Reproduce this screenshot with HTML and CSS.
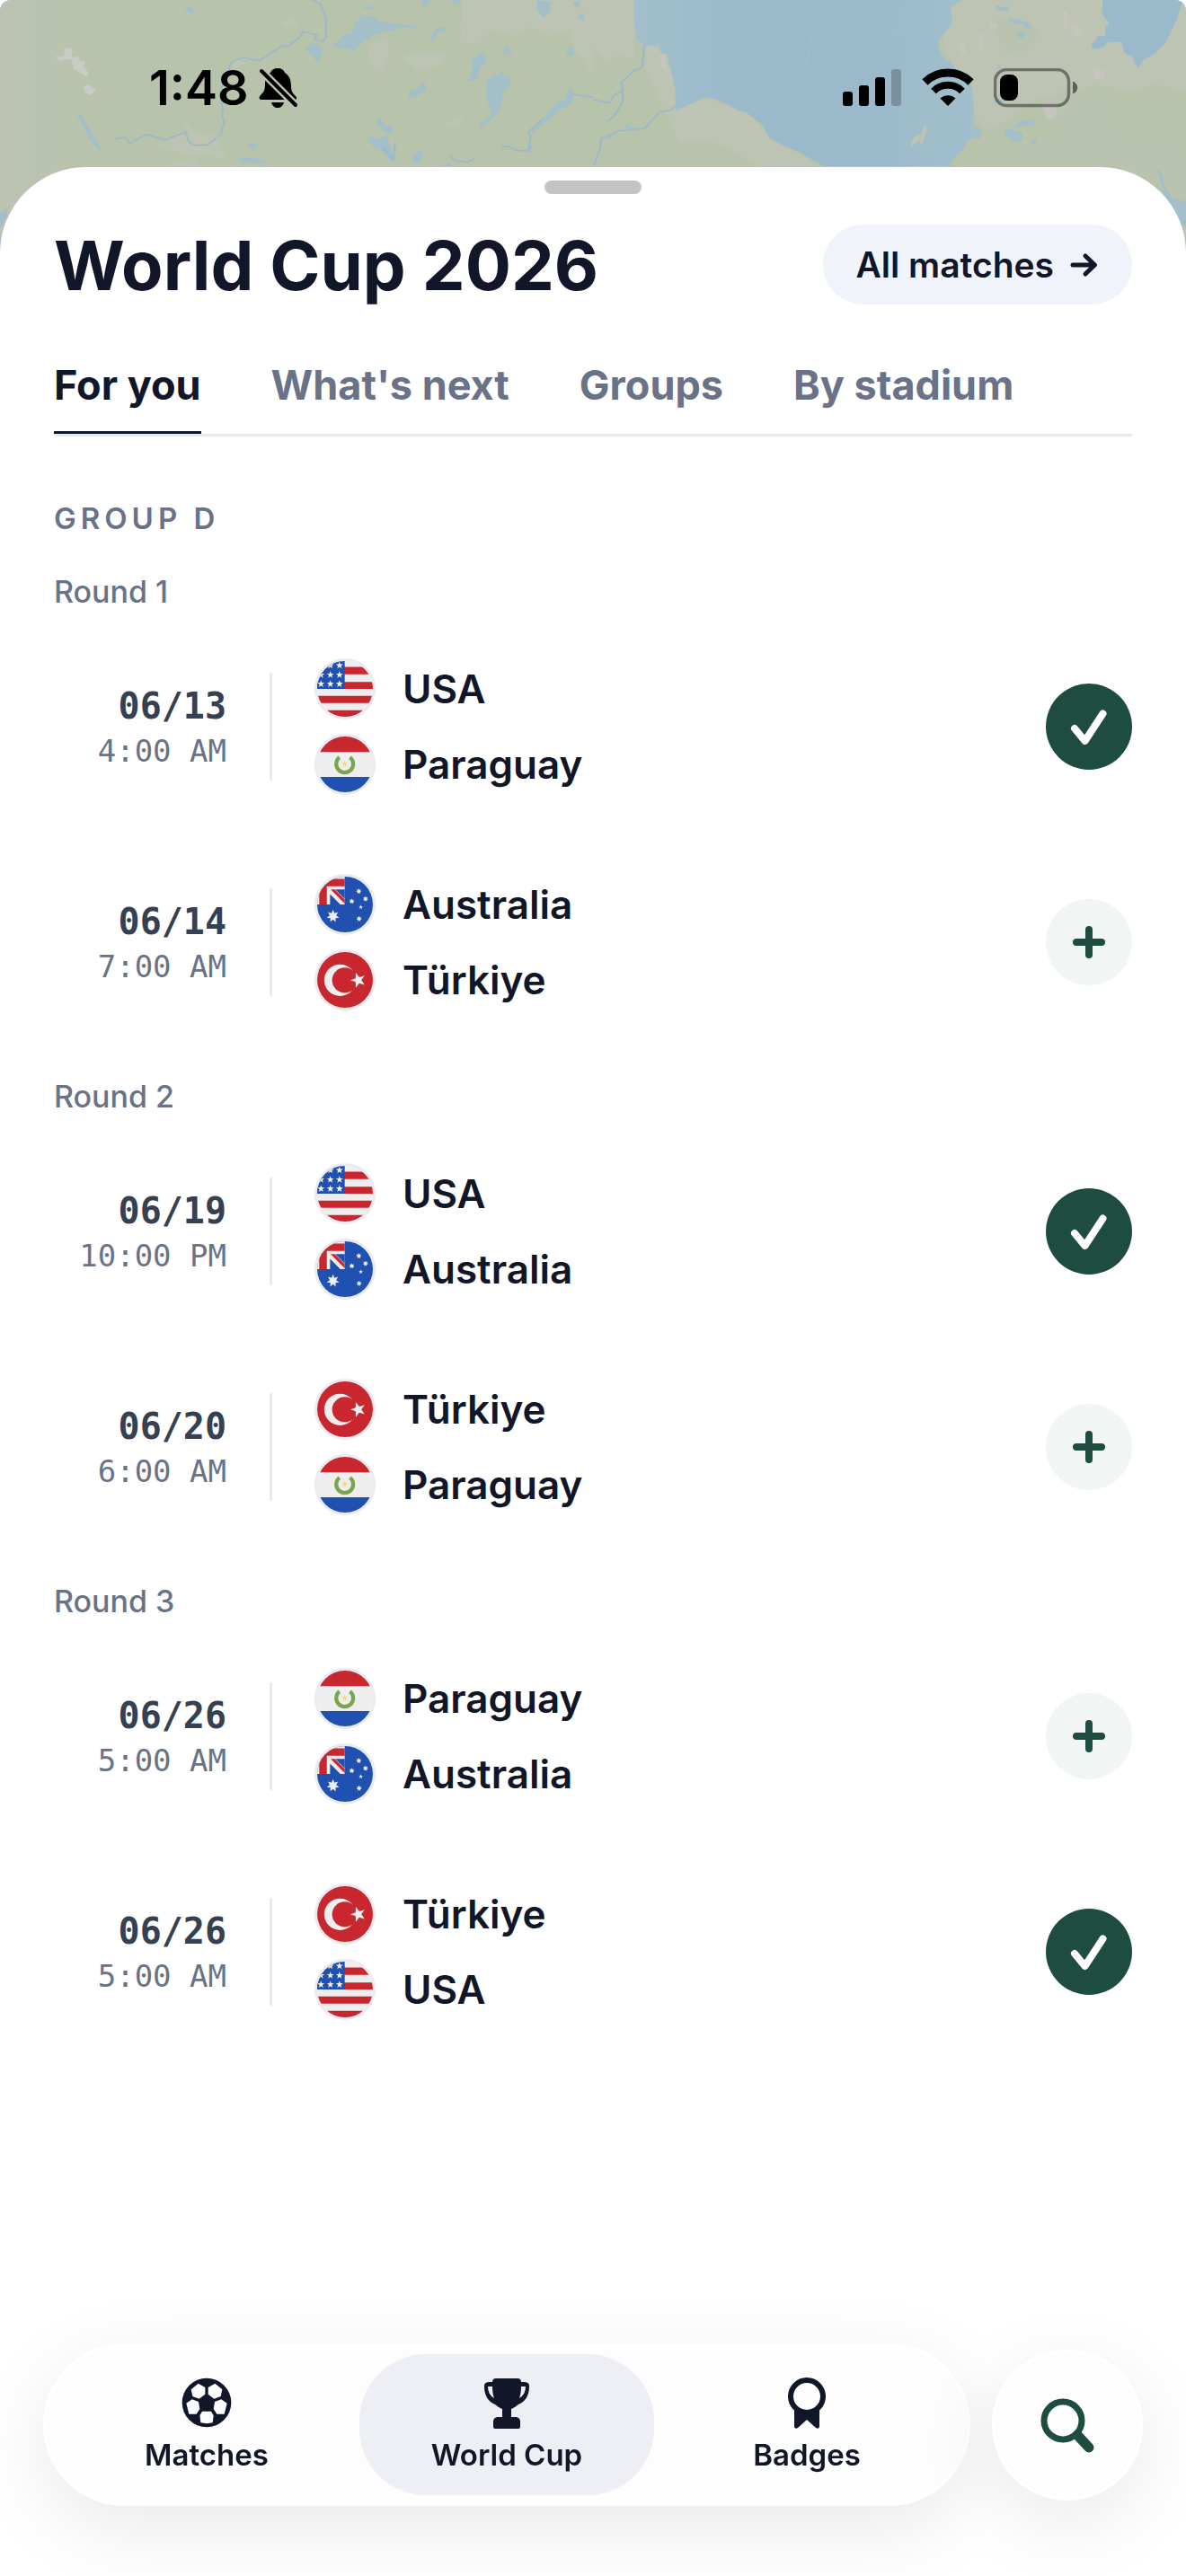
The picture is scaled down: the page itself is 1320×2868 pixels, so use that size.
FILE: index.html
```html
<!DOCTYPE html>
<html lang="en">
<head>
  <meta charset="UTF-8">
  <meta name="viewport" content="width=device-width, initial-scale=1.0">
  <title>World Cup 2026</title>
  <link rel="stylesheet" href="styles.css">
</head>
<body>

  <!-- shared flags -->
  <svg class="sprite" aria-hidden="true">
    <symbol id="star" viewBox="-10 -10 20 20">
      <path d="M0-10 2.4-3.2 9.5-3.1 3.8 1.2 5.9 8.1 0 4-5.9 8.1-3.8 1.2-9.5-3.1-2.4-3.2z"/>
    </symbol>
    <symbol id="star7" viewBox="-10 -10 20 20">
      <path d="M0-10 2.2-4.5 7.8-6.2 4.9-1.1 9.7 2.2 3.9 3.1 4.3 9 0 5-4.3 9-3.9 3.1-9.7 2.2-4.9-1.1-7.8-6.2-2.2-4.5z"/>
    </symbol>
    <symbol id="usa" viewBox="0 0 190 190">
      <path fill="#eee" d="M0 0h190v190H0z"/>
      <path fill="#c8272f" d="M0 20h190v25H0zM0 71h190v24H0zM0 119h190v24H0zM0 168h190v22H0z"/>
      <path fill="#2050b0" d="M0 0h78v95H0z"/>
      <path fill="#2050b0" d="M0 0h94v95H0z"/>
      <g fill="#eee">
        <use href="#star" x="32" y="2" width="26" height="26"/>
        <use href="#star" x="63" y="2" width="26" height="26"/>
        <use href="#star" x="0" y="34" width="26" height="26"/>
        <use href="#star" x="32" y="34" width="26" height="26"/>
        <use href="#star" x="63" y="34" width="26" height="26"/>
        <use href="#star" x="0" y="65" width="26" height="26"/>
        <use href="#star" x="32" y="65" width="26" height="26"/>
        <use href="#star" x="63" y="65" width="26" height="26"/>
      </g>
    </symbol>
    <symbol id="paraguay" viewBox="0 0 190 190">
      <path fill="#eee" d="M0 0h190v190H0z"/>
      <path fill="#c8272f" d="M0 0h190v53H0z"/>
      <path fill="#2050b0" d="M0 138h190v52H0z"/>
      <path fill="none" stroke="#7aa54f" stroke-width="13" d="M76 71a29 29 0 1 0 36 0"/>
      <use href="#star" x="82" y="81" width="24" height="24" fill="#fbdc60"/>
    </symbol>
    <symbol id="australia" viewBox="0 0 190 190">
      <path fill="#2050b0" d="M0 0h190v190H0z"/>
      <path fill="#eee" d="M0 0h94v95H0z"/>
      <path fill="#c8272f" d="M7 8h87v25H33v62H7z"/>
      <path fill="#2050b0" d="M44 60v35h35zM62 44h32v32z"/>
      <path fill="#c8272f" d="M46 44h14l34 34v14z"/>
      <g fill="#eee">
        <use href="#star7" x="32" y="113" width="44" height="44"/>
        <use href="#star7" x="132" y="40" width="20" height="20"/>
        <use href="#star7" x="108" y="74" width="20" height="20"/>
        <use href="#star7" x="155" y="66" width="20" height="20"/>
        <use href="#star7" x="133" y="134" width="20" height="20"/>
        <use href="#star" x="141" y="96" width="16" height="16"/>
      </g>
    </symbol>
    <symbol id="turkiye" viewBox="0 0 190 190">
      <path fill="#c8272f" d="M0 0h190v190H0z"/>
      <circle cx="78" cy="96" r="54" fill="#eee"/>
      <circle cx="94" cy="96" r="43" fill="#c8272f"/>
      <g transform="rotate(-18 140 96)">
        <use href="#star" x="113" y="69" width="54" height="54" fill="#eee"/>
      </g>
    </symbol>
    <symbol id="check" viewBox="0 0 96 96">
      <path fill="none" stroke="currentColor" stroke-width="8" stroke-linecap="round" stroke-linejoin="round" d="M32 50l11.500 14 20-30.500"/>
    </symbol>
    <symbol id="plus" viewBox="0 0 96 96">
      <path fill="none" stroke="currentColor" stroke-width="8" stroke-linecap="round" d="M34 48h28M48 34v28"/>
    </symbol>
  </svg>

  <svg class="map" viewBox="0 0 1320 350" preserveAspectRatio="xMidYMin slice" aria-hidden="true">
    <defs>
      <linearGradient id="hills" x1="0" x2="1">
        <stop offset="0" stop-color="#bcc3b3"/>
        <stop offset="1" stop-color="#b7c3aa"/>
      </linearGradient>
      <linearGradient id="bay" x1="0" x2="1">
        <stop offset="0" stop-color="#a2bfcb"/>
        <stop offset=".3" stop-color="#9ab9cb"/>
        <stop offset=".7" stop-color="#9ab9cb"/>
        <stop offset="1" stop-color="#a2bfcb"/>
      </linearGradient>
    </defs>
    <path fill="#b7c3aa" d="M0 0h1320v350H0z"/>
    <path fill="url(#hills)" d="M0 0h130v350H0z"/>

    <!-- west -->
    <g transform="scale(.421 .3333)">
      <path fill="#bec4b3" d="M1220 0h348v270l-20-60-30-40-10-70-50 20-60-30-40 30-60-20-30 40-50 10zM970 150l50-20 10 50-20 60-30-20zM1060 190l60-20 60 10-20 40-60 10zM740 75l40-20 10 30-30 10zM610 210l30-20 5 20-25 25zM415 490l70-45 80 5 30 60-10 30-30-30-50 10zM450 545l70-20v30h-70zM490 410l25 25-5 15-20-15zM1170 410l60-20-10 20-40 20z"/>
      <path fill="#cbcbc6" d="M145 190l25-5v-25l20 2v32l15-8 8 20 13-3-6 20 15 20-4 14-20-15-16-10-6-35-30 5zM220 290l15-8 18 20-12 16-15-8z"/>
      <g fill="#a3bfc9">
        <path d="M485 28l20-5 15 20-18 2zM880 155l30-40 20-5 10-35 20-25 30 10 10 10 45 10 50 5 10 12-45-7-15 10-30 5-40 20-20 20-18 22zM960 20l25 2 12 12-35-4zM808 160l20-15 25 15-5 30-10 18-15-25zM1140 130l5-25 20-15 22 10-30 10-15 30zM1245 270l-8 0 10-30 0-40 20-15 12-15 8 30-18 30-10 40zM1330 180l10-28 16 30zM1325 235l10 20 15 0-5 40-15 10-5 55-20 30-15 20-25 20 5-20 30-25-15-60 0-50 15-20 20-5zM1078 330l5-25 20-10 20-20 5 25-25 20zM1497 160h20v25h-18zM1420 0l35 5 0 35-20 20-15-30zM1112 0h28l-20 25zM1190 0h30l-10 18zM1515 5l20 0-5 20-12-5zM1530 45h14v25l-16-5zM204 385l12 0 15 35 15 30 10 25 15 25-10 0-25-35-15-40zM655 485l15-8 14 5-12 16zM632 528l40 0 33 12 0 5-75-5zM995 395l10 0 8 20 25 10 0 18-22-5-18-25zM972 465l15-10 15 10 18-15 8 30 15 40 0 20-12-5-25-35-20-10zM1090 530l15-30 15 5-10 38-18 0zM1165 555l20-8 15 8zM0 710l20-15 0 20-20 50zM0 800h6v130H0zM1395 440l20-15 20-30 35-50 25-10 10-45 10 10 0 40-20 20-20 10-15 20-30 30-20 20zM1395 480l14 0-5 25-10 0z"/>
      </g>
      <g fill="none" stroke="#9cb9c8" stroke-width="5" stroke-linejoin="round">
        <path d="M828 0l20 15 14 45v65l-7 12-22-5 5-15-36-12-10 20-30 30-15-3-25 20-35 30-20-3-20-7-25 8-17 20 0 30-18 5-2 85 5 30-5 10 8 30-10 40-35 35-38 0-12-15-7-28-55 25-50-18-45 32"/>
        <path d="M305 463l25-5 12 18M1325 488l20 2 20 12 33 2 5-50-8-12 40-45M1500 330l15-15 53 10M1010 490l30 45 5-60M1190 517l10 18 35 7 22-14"/>
      </g>
    </g>

    <!-- bay and east -->
    <g transform="translate(660) scale(.421 .3333)">
      <path fill="#bec4b3" d="M0 0h110v200l-40-20-30 30-40-60zM140 155h50l35 190-50 25 130-40 110 50 60 90 90 60 20 25H440l-80-60-60-30-70 10-90-240zM920 0h648v310l-80-30-60 30-100-30-80 40-70 10-130 110-40-60-80-230z"/>
      <path fill="#b9c3af" d="M1060 60l100 20 30 50-60 60-50-20zM1200 330l70-40 80 60 60 100 158 50v370h-40l-80-220-160-100-180-20 30-60 100-20z"/>
      <path fill="#c5c5bd" d="M970 140h15v40h-12zM1020 115h12v50h-10zM1050 80h20v15h-20zM1265 75l30 25-10 25-20-10zM1320 230h35v35h-30zM1185 345h45l-10 50-20 5zM175 155l15 30 10 60-20-20zM1243 35h12v60h-10z"/>
      <path fill="url(#bay)" d="M108 0h868l-30 25 4 55-35 50-2 30 12 30 20 18 12 20 30 15 14 45 5 40 0 95 12 0 10 25-5 15-28 0-20 40-25 30-5 22H610l-30-20-30-25-40-20-45-30-15-40-45-45-20-5-60-40-30-5-75 45-5-90-20-100-15 0-5-28h-40l-20-20-7-60z"/>
      <path fill="#a3bfc9" d="M800 40l35-30-5 70-20 50-15-10zM570 100l15 20-15 110-10-20zM840 260l120 30-20 120-60 130-60 10-20-80z" opacity=".4"/>
      <path fill="#bec4b3" d="M840 480l10-25 20-10 5-30 8 20-15 50-5-20-20 25z"/>
      <path fill="#9ab9cb" d="M1348 0h212l-15 60-30 80-30 40-30 20-15 28-15-40-20-10-8-38-35 0-15 20-25 5-5-15 20-30 18 0 0-30 10-10-20-35z"/>
      <g fill="#a3bfc9">
        <path d="M1060 15l25 10 15-5v18l-30-5zM1098 58l25 8 30 10 8 25-25-18-38-12zM1122 103l20 5 2 20-20-3zM1085 435l20-5 30 15v25l-20 5-20-15zM1112 420l30-20h25v15l-50 10zM1157 465h15v20l-12-5zM1055 335l30-5 5 10-25 5zM1070 212l10 5-4 15-6-5zM1490 570l8 0 10 20 0 30 14 20 6 20 30 10 10 10v75l-20-10-10-35-20-20-15-40 5-20zM1560 820h8v80zM80 412l35 15-25 5zM25 455l25-5-8 15z"/>
      </g>
      <g fill="none" stroke="#9cb9c8" stroke-width="5" stroke-linejoin="round">
        <path d="M136 150l-6 75-20 10-35 40 5 60-22 50-20 20M0 333l45 10 10-25 23-15M225 348l-20 20-28 5-40 55-70 10-45 25-5 40-15 50"/>
      </g>
    </g>
  </svg>

  <header class="status-bar">
    <span class="clock">1:48</span>
    <svg class="bell" viewBox="0 0 48 48" aria-label="Silent">
      <mask id="cut">
        <path fill="#fff" d="M0 0h48v48H0z"/>
        <path stroke="#000" stroke-width="9" d="M0 1l48 48"/>
      </mask>
      <g mask="url(#cut)">
        <path d="M22 2c4 0 7 2 8 5 5 3 7 8 7 15 0 6 2 8 5 11 2 2 1 4-1 4H4c-3 0-3-3-1-5 4-4 5-6 5-12 0-7 2-11 6-13 1-3 4-5 8-5z"/>
        <path d="M15 40h14c-1 4-4 6-7 6s-6-2-7-6z"/>
      </g>
      <path stroke="#000" stroke-width="4" stroke-linecap="round" d="M4 5l38 38"/>
    </svg>
    <div class="status-icons">
      <svg width="66" height="44" viewBox="0 0 66 44" aria-label="Signal">
        <rect x="0" y="26" width="11" height="16" rx="3"/>
        <rect x="18" y="19" width="11" height="23" rx="3"/>
        <rect x="36" y="10" width="11" height="32" rx="3"/>
        <rect x="54" y="1" width="11" height="41" rx="3" opacity=".22"/>
      </svg>
      <svg width="58" height="44" viewBox="0 0 58 44" aria-label="Wi-Fi">
        <g fill="none" stroke="#000">
          <path stroke-width="9" d="M3.500 15.500a36.500 36.500 0 0 1 51 0"/>
          <path stroke-width="8" d="M13 25.500a22.500 22.500 0 0 1 32 0"/>
        </g>
        <path d="M29 42l-8.500-8.500a12.500 12.500 0 0 1 17 0z"/>
      </svg>
      <svg width="94" height="44" viewBox="0 0 94 44" aria-label="Battery">
        <rect x="1.500" y="1.500" width="82" height="40" rx="13" fill="none" stroke="#000" stroke-width="3.500" opacity=".42"/>
        <path d="M88 14.500c7 3 7 11 0 14z" opacity=".5"/>
        <rect x="7" y="7" width="20" height="29" rx="8"/>
      </svg>
    </div>
  </header>

  <main class="sheet">
    <div class="grabber"></div>

    <div class="title-row">
      <h1>World Cup 2026</h1>
      <button class="all-matches">All matches
        <svg viewBox="0 0 36 36" aria-hidden="true"><path d="M6 18h24M20 8l10.500 10L20 28"/></svg>
      </button>
    </div>

    <div class="tabs" role="tablist">
      <button class="tab active" role="tab" aria-selected="true">For you</button>
      <button class="tab" role="tab">What's next</button>
      <button class="tab" role="tab">Groups</button>
      <button class="tab" role="tab">By stadium</button>
    </div>

    <h2>GROUP D</h2>

    <section>
      <h3>Round 1</h3>
      <div class="match">
        <div class="when"><b>06/13</b><span>4:00 AM</span></div>
        <div class="teams">
          <div class="team"><svg class="flag"><use href="#usa"/></svg>USA</div>
          <div class="team"><svg class="flag"><use href="#paraguay"/></svg>Paraguay</div>
        </div>
        <button class="follow on" aria-label="Added"><svg><use href="#check"/></svg></button>
      </div>
      <div class="match">
        <div class="when"><b>06/14</b><span>7:00 AM</span></div>
        <div class="teams">
          <div class="team"><svg class="flag"><use href="#australia"/></svg>Australia</div>
          <div class="team"><svg class="flag"><use href="#turkiye"/></svg>Türkiye</div>
        </div>
        <button class="follow" aria-label="Add"><svg><use href="#plus"/></svg></button>
      </div>
    </section>

    <section>
      <h3>Round 2</h3>
      <div class="match">
        <div class="when"><b>06/19</b><span>10:00 PM</span></div>
        <div class="teams">
          <div class="team"><svg class="flag"><use href="#usa"/></svg>USA</div>
          <div class="team"><svg class="flag"><use href="#australia"/></svg>Australia</div>
        </div>
        <button class="follow on" aria-label="Added"><svg><use href="#check"/></svg></button>
      </div>
      <div class="match">
        <div class="when"><b>06/20</b><span>6:00 AM</span></div>
        <div class="teams">
          <div class="team"><svg class="flag"><use href="#turkiye"/></svg>Türkiye</div>
          <div class="team"><svg class="flag"><use href="#paraguay"/></svg>Paraguay</div>
        </div>
        <button class="follow" aria-label="Add"><svg><use href="#plus"/></svg></button>
      </div>
    </section>

    <section>
      <h3>Round 3</h3>
      <div class="match">
        <div class="when"><b>06/26</b><span>5:00 AM</span></div>
        <div class="teams">
          <div class="team"><svg class="flag"><use href="#paraguay"/></svg>Paraguay</div>
          <div class="team"><svg class="flag"><use href="#australia"/></svg>Australia</div>
        </div>
        <button class="follow" aria-label="Add"><svg><use href="#plus"/></svg></button>
      </div>
      <div class="match">
        <div class="when"><b>06/26</b><span>5:00 AM</span></div>
        <div class="teams">
          <div class="team"><svg class="flag"><use href="#turkiye"/></svg>Türkiye</div>
          <div class="team"><svg class="flag"><use href="#usa"/></svg>USA</div>
        </div>
        <button class="follow on" aria-label="Added"><svg><use href="#check"/></svg></button>
      </div>
    </section>
  </main>

  <div class="bottom">
    <nav class="nav">
      <a href="#matches">
        <svg viewBox="0 0 168 168" aria-hidden="true">
          <circle cx="84" cy="84" r="82"/>
          <path fill="#fdfdfd" d="M56 20l23 13v23L59 71l-22-8-5-23zM112 20L89 33v23l20 15 22-8 5-23zM16 86l19-13 22 8 4 24-11 17H25zM152 86l-19-13-22 8-4 24 11 17h25zM69 113h30l8 14-3 24-20 3-20-3-3-24z"/>
        </svg>
        Matches
      </a>
      <a href="#world-cup" class="active">
        <svg viewBox="0 0 56 56" aria-hidden="true">
          <path d="M16 1h24c3 0 4 2 4 4 6 0 9 0 9 5 0 11-5 17-12 20-2 1-3 3-8 5v9h4c4 0 6 2 6 5v6q0 2-2 2H15q-2 0-2-2v-6c0-3 2-5 6-5h4v-9c-5-2-6-4-8-5C8 27 3 21 3 10c0-5 3-5 9-5 0-2 1-4 4-4z"/>
          <path fill="#eeeff4" d="M7 10h5q0 8 2 13Q7 19 7 10zM49 10h-5q0 8-2 13 7-4 7-13z"/>
        </svg>
        World Cup
      </a>
      <a href="#badges">
        <svg viewBox="0 0 56 56" aria-hidden="true">
          <path d="M14 33q14 10 28 0v22q-1 3-4 1L28 47 18 56q-3 2-4-1z"/>
          <circle cx="28" cy="21" r="18" fill="#fdfdfd" stroke="#111629" stroke-width="6"/>
        </svg>
        Badges
      </a>
    </nav>
    <button class="search" aria-label="Search">
      <svg viewBox="0 0 168 168" aria-hidden="true">
        <circle cx="79" cy="79" r="21" stroke-width="7"/>
        <path stroke-width="11" stroke-linecap="round" d="M95 95l13 14"/>
      </svg>
    </button>
  </div>

</body>
</html>
```
FILE: styles.css
```css
* {
  box-sizing: border-box;
}

body {
  margin: 0;
  min-height: 100vh;
  display: flex;
  flex-direction: column;
  background: #fff;
  color: #111629;
  font-family: Inter, "Liberation Sans", sans-serif;
}

h1, h2, h3 {
  margin: 0;
}

button {
  border: 0;
  padding: 0;
  background: none;
  color: inherit;
  font: inherit;
  cursor: pointer;
}

.sprite {
  position: absolute;
  width: 0;
  height: 0;
}

/* map sits behind the status bar and the sheet corners */
.map {
  position: absolute;
  top: 0;
  left: 0;
  width: 100%;
  height: 350px;
  border-radius: 12px 12px 0 0;
}

.status-bar {
  position: relative;
  display: flex;
  align-items: center;
  gap: 10px;
  height: 186px;
  padding: 10px 120px 0 166px;
  color: #000;
}

.clock {
  font-size: 54px;
  font-weight: 600;
  line-height: 64px;
}

.bell {
  width: 48px;
  height: 48px;
}

.status-icons {
  display: flex;
  gap: 22px;
  margin-left: auto;
}

.sheet {
  position: relative;
  flex: 1;
  padding: 15px 60px 400px;
  background: #fff;
  border-radius: 96px 96px 0 0;
}

.grabber {
  width: 108px;
  height: 15px;
  margin: 0 auto 34px;
  border-radius: 8px;
  background: #c4c4c5;
}

.title-row {
  display: flex;
  justify-content: space-between;
  align-items: center;
}

.title-row h1 {
  font-size: 76px;
  font-weight: 700;
  line-height: 88px;
}

.all-matches {
  display: flex;
  align-items: center;
  gap: 15px;
  height: 89px;
  padding: 0 36px;
  border-radius: 45px;
  background: #f0f3f9;
  font-size: 39px;
  font-weight: 600;
}

.all-matches svg {
  width: 36px;
  height: 36px;
  fill: none;
  stroke: currentColor;
  stroke-width: 5;
  stroke-linecap: round;
  stroke-linejoin: round;
}

/* tabs */
.tabs {
  display: flex;
  gap: 78px;
  padding-top: 63px;
  border-bottom: 3px solid #e9e9ee;
}

.tab {
  padding-bottom: 24px;
  border-bottom: 3px solid transparent;
  color: #6a7288;
  font-size: 45px;
  font-weight: 700;
  line-height: 54px;
}

.tab.active {
  border-color: #111629;
  color: #111629;
}

h2 {
  margin: 71px 0 10px;
  color: #6a7288;
  font-size: 33px;
  font-weight: 600;
  line-height: 40px;
  letter-spacing: 5px;
}

h3 {
  padding: 32px 0 10px;
  color: #6a7288;
  font-size: 34px;
  font-weight: 500;
  line-height: 40px;
}

/* match rows */
.match {
  display: flex;
  align-items: center;
  height: 240px;
}

.when {
  display: flex;
  flex-direction: column;
  width: 192px;
  padding-top: 3px;
  text-align: right;
  font-family: "DejaVu Sans Mono", "Liberation Mono", monospace;
  line-height: 50px;
}

.when b {
  color: #354052;
  font-size: 40px;
}

.when span {
  color: #6a7288;
  font-size: 34px;
}

.teams {
  display: flex;
  flex: 1;
  flex-direction: column;
  gap: 16px;
}

.teams::before {
  content: "";
  position: absolute;
  width: 3px;
  height: 120px;
  margin: 16px 0 0 48px;
  background: #e9e9ee;
}

.team {
  display: flex;
  align-items: center;
  gap: 30px;
  padding-left: 98px;
  font-size: 44px;
  font-weight: 600;
}

.flag {
  width: 68px;
  height: 68px;
  border: 3px solid #e9ebf0;
  border-radius: 50%;
}

.follow {
  width: 96px;
  height: 96px;
  border-radius: 50%;
  background: #f1f5f4;
  color: #1f4c40;
}

.follow.on {
  background: #1f4c40;
  color: #fff;
}

.follow svg {
  display: block;
  width: 96px;
  height: 96px;
}

/* floating bottom bar */
.bottom {
  position: fixed;
  right: 48px;
  bottom: 78px;
  left: 48px;
  display: flex;
  align-items: center;
  gap: 24px;
}

.nav,
.search {
  border: 3px solid #fff;
  background: #fdfdfd;
  box-shadow: 0 24px 90px rgba(0, 0, 0, 0.09);
}

.nav {
  display: flex;
  flex: 1;
  gap: 6px;
  padding: 9px 15px;
  border-radius: 91px;
}

.nav a {
  display: flex;
  flex: 1;
  flex-direction: column;
  align-items: center;
  gap: 10px;
  padding: 26px 0 25px;
  border-radius: 74px;
  color: inherit;
  font-size: 33px;
  font-weight: 600;
  line-height: 40px;
  text-decoration: none;
}

.nav a.active {
  background: #eeeff4;
}

.nav svg {
  width: 56px;
  height: 56px;
  overflow: visible;
  fill: #111629;
}

.search {
  width: 168px;
  height: 168px;
  border-radius: 50%;
}

.search svg {
  display: block;
  width: 168px;
  height: 168px;
  margin: -3px;
  fill: none;
  stroke: #1f4c40;
}
```
